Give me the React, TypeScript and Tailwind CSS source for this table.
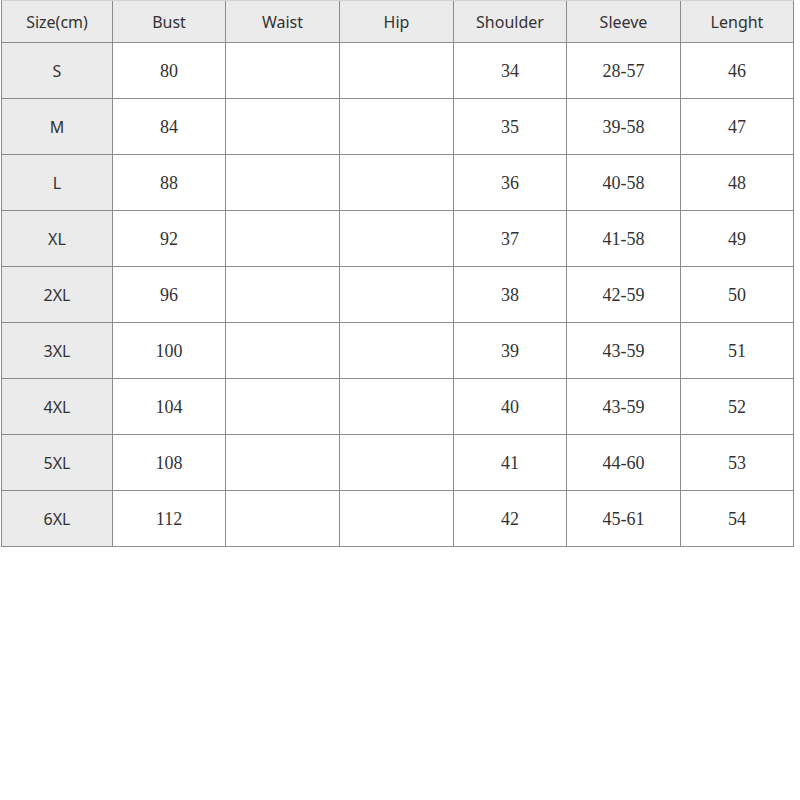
const headers = ["Size(cm)", "Bust", "Waist", "Hip", "Shoulder", "Sleeve", "Lenght"];

const rows = [
  ["S", "80", "", "", "34", "28-57", "46"],
  ["M", "84", "", "", "35", "39-58", "47"],
  ["L", "88", "", "", "36", "40-58", "48"],
  ["XL", "92", "", "", "37", "41-58", "49"],
  ["2XL", "96", "", "", "38", "42-59", "50"],
  ["3XL", "100", "", "", "39", "43-59", "51"],
  ["4XL", "104", "", "", "40", "43-59", "52"],
  ["5XL", "108", "", "", "41", "44-60", "53"],
  ["6XL", "112", "", "", "42", "45-61", "54"],
];

const App = () => {
  return (
    <div className="w-[800px] h-[800px] bg-white">
      <div className="ml-px inline-grid grid-cols-[111px_113px_114px_114px_113px_114px_113px] grid-rows-[42px_repeat(9,56px)] border-l border-t border-l-[#8c8c8c] border-t-[#d4d4d4]">
        {headers.map((h) => (
          <div
            key={h}
            className="flex items-center justify-center bg-[#ebebeb] border-r border-b border-[#8c8c8c] text-[#333] text-[16px] font-['Noto_Sans',sans-serif]"
          >
            {h}
          </div>
        ))}
        {rows.map((row) =>
          row.map((cell, i) =>
            i === 0 ? (
              <div
                key={row[0] + i}
                className="flex items-center justify-center bg-[#ebebeb] border-r border-b border-[#8c8c8c] text-[#333] text-[16px] font-['Noto_Sans',sans-serif]"
              >
                {cell}
              </div>
            ) : (
              <div
                key={row[0] + i}
                className="flex items-center justify-center bg-white border-r border-b border-[#8c8c8c] text-[#333] text-[18px] font-['Liberation_Serif',serif] pt-0.5"
              >
                {cell}
              </div>
            )
          )
        )}
      </div>
    </div>
  );
};

export default App;
